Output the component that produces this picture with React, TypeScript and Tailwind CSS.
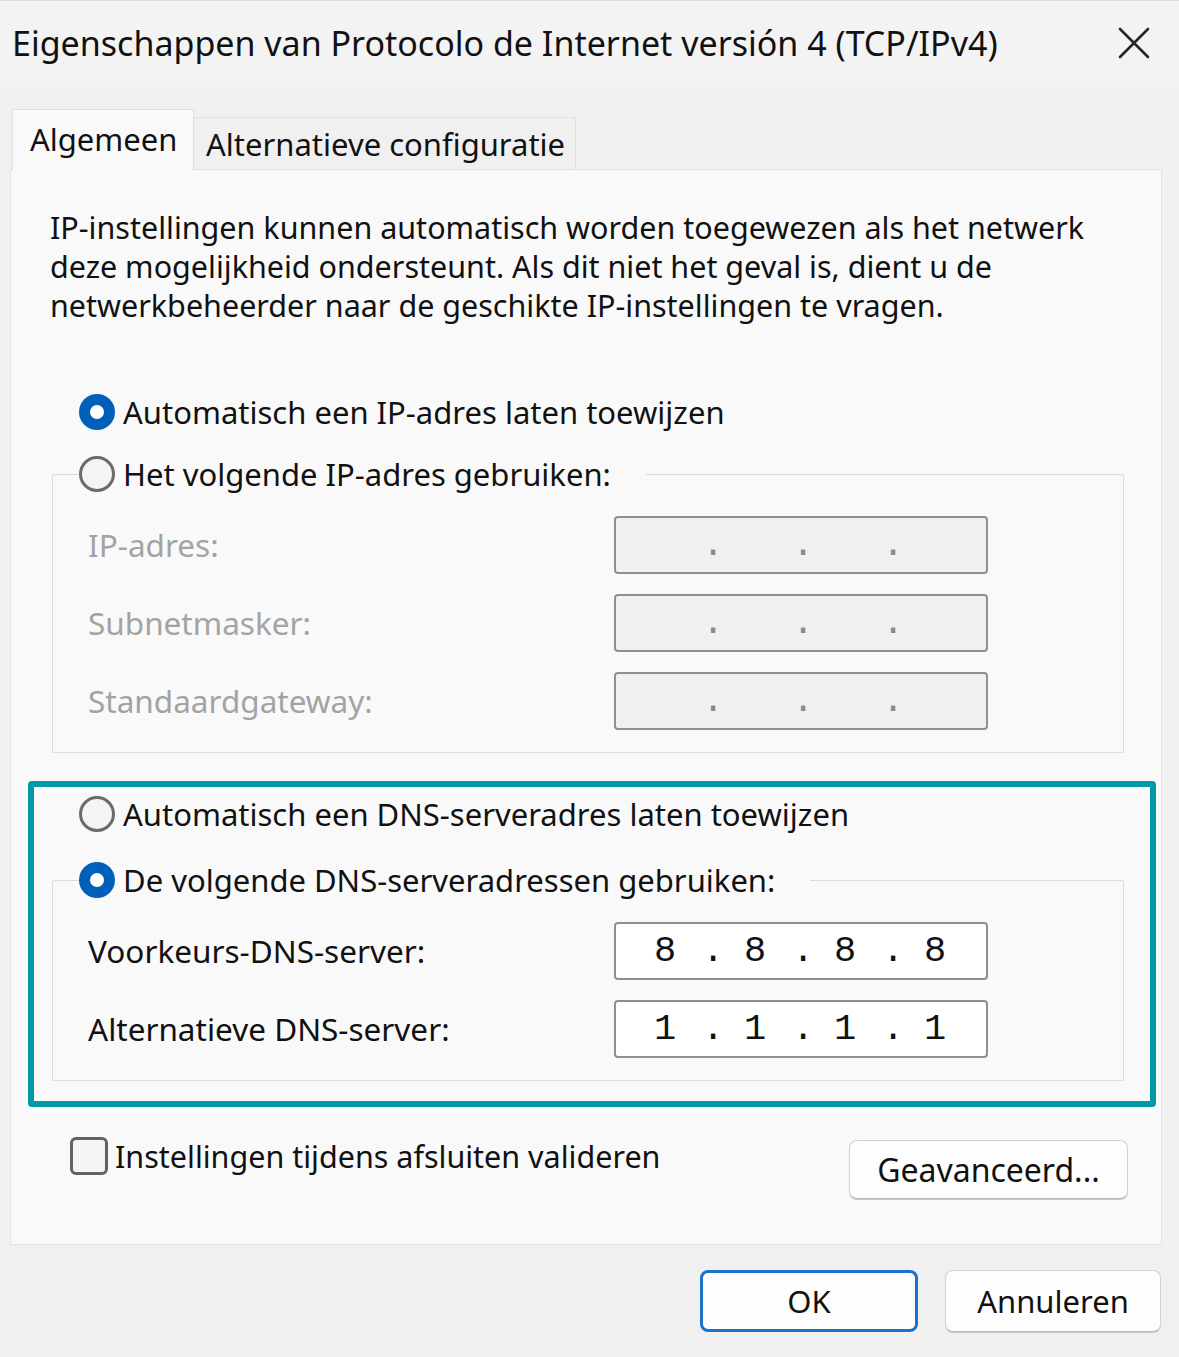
import React from "react";

type RadioProps = { checked?: boolean };

function Radio({ checked }: RadioProps) {
  if (checked) {
    return (
      <span className="flex h-[36px] w-[36px] shrink-0 items-center justify-center rounded-full bg-[#005fb8]">
        <span className="h-[14px] w-[14px] rounded-full bg-white" />
      </span>
    );
  }
  return <span className="h-[36px] w-[36px] shrink-0 rounded-full border-[3px] border-[#6b6b6b] bg-[#f4f4f4]" />;
}

function RadioRow({ checked, label }: { checked?: boolean; label: string }) {
  return (
    <div className="flex h-[40px] items-center gap-[8px]">
      <Radio checked={checked} />
      <span className="whitespace-nowrap">{label}</span>
    </div>
  );
}

function IpField({ label, value, enabled }: { label: string; value?: string[]; enabled?: boolean }) {
  const parts = value ?? ["", "", "", ""];
  return (
    <div className="flex h-[58px] items-center">
      <span className={`w-[526px] whitespace-nowrap text-[31.5px] ${enabled ? "text-[#111]" : "text-[#a3a3a3]"}`}>{label}</span>
      <div
        className={`flex h-[58px] w-[374px] items-center rounded-[4px] border-2 border-[#8f8f8f] pl-[26px] font-['Liberation_Mono',monospace] text-[37px] leading-none ${
          enabled ? "bg-white text-[#111]" : "bg-[#f0f0f0] text-[#8a8a8a]"
        }`}
      >
        {parts.map((p, i) => (
          <React.Fragment key={i}>
            <span className="w-[46px] text-center">{p}</span>
            {i < 3 && <span className="w-[44px] pl-[6px] text-center">.</span>}
          </React.Fragment>
        ))}
      </div>
    </div>
  );
}

function GroupBox({ checked, label, children }: { checked?: boolean; label: string; children: React.ReactNode }) {
  return (
    <fieldset className="w-[1072px] rounded-[2px] border border-[#dcdcdc] pb-[22px] pl-[26px]">
      <legend className="pr-[35px]">
        <RadioRow checked={checked} label={label} />
      </legend>
      <div className="ml-[9px] mt-[22px] flex flex-col gap-[20px]">{children}</div>
    </fieldset>
  );
}

function Button({ children, primary, className }: { children: React.ReactNode; primary?: boolean; className?: string }) {
  return (
    <button
      className={`flex items-center justify-center rounded-[8px] bg-[#fdfdfd] ${
        primary ? "border-[3px] border-[#1a73c8]" : "border border-[#d2d2d2] border-b-[#b8b8b8] shadow-[0_1px_0_#c8c8c8]"
      } ${className ?? ""}`}
    >
      {children}
    </button>
  );
}

export default function App() {
  return (
    <div className="flex h-[1357px] w-[1179px] flex-col overflow-hidden border-t border-[#dadada] bg-[#f0f0f0] font-['Noto_Sans',sans-serif] text-[31px] leading-[40px] text-[#111]">
      {/* title bar */}
      <div className="flex h-[86px] shrink-0 items-center justify-between bg-[#f3f3f3] pb-[2px] pl-[12px] pr-[29px]">
        <span className="whitespace-nowrap text-[34px]">Eigenschappen van Protocolo de Internet versión 4 (TCP/IPv4)</span>
        <svg width="32" height="32" viewBox="0 0 32 32">
          <path d="M2 2 L30 30 M30 2 L2 30" stroke="#262626" strokeWidth="2.6" strokeLinecap="round" />
        </svg>
      </div>

      {/* tabs */}
      <div className="ml-[12px] mt-[22px] flex items-end">
        <div className="relative z-10 -mb-px h-[61px] w-[182px] rounded-t-[3px] border border-b-0 border-[#e0e0e0] bg-[#f9f9f9] pl-[17px] pt-[9px]">
          Algemeen
        </div>
        <div className="h-[52px] w-[382px] border border-b-0 border-l-0 border-[#e0e0e0] bg-[#f0f0f0] pl-[12px] pt-[6px]">
          Alternatieve configuratie
        </div>
      </div>

      {/* panel */}
      <div className="mx-[10px] flex h-[1076px] w-[1152px] flex-col border border-[#e3e3e3] bg-[#f9f9f9]">
        <p className="whitespace-nowrap pl-[39px] pt-[38px] text-[30.5px] leading-[39px]">
          IP-instellingen kunnen automatisch worden toegewezen als het netwerk
          <br />
          deze mogelijkheid ondersteunt. Als dit niet het geval is, dient u de
          <br />
          netwerkbeheerder naar de geschikte IP-instellingen te vragen.
        </p>

        <div className="ml-[68px] mt-[67px]">
          <RadioRow checked label="Automatisch een IP-adres laten toewijzen" />
        </div>

        <div className="ml-[41px] mt-[22px]">
          <GroupBox label="Het volgende IP-adres gebruiken:">
            <IpField label="IP-adres:" />
            <IpField label="Subnetmasker:" />
            <IpField label="Standaardgateway:" />
          </GroupBox>
        </div>

        {/* DNS section */}
        <div className="ml-[17px] mt-[28px] h-[326px] w-[1128px] rounded-[4px] border-[6px] border-[#0099a8] pt-[7px]">
          <div className="ml-[45px]">
            <RadioRow label="Automatisch een DNS-serveradres laten toewijzen" />
          </div>
          <div className="ml-[18px] mt-[26px]">
            <GroupBox checked label="De volgende DNS-serveradressen gebruiken:">
              <IpField enabled label="Voorkeurs-DNS-server:" value={["8", "8", "8", "8"]} />
              <IpField enabled label="Alternatieve DNS-server:" value={["1", "1", "1", "1"]} />
            </GroupBox>
          </div>
        </div>

        <div className="mt-[29px] flex items-start justify-between pl-[59px] pr-[33px]">
          <div className="flex items-center gap-[7px]">
            <span className="h-[38px] w-[38px] rounded-[6px] border-[3px] border-[#626262] bg-[#f4f4f4]" />
            <span className="whitespace-nowrap text-[30.5px]">Instellingen tijdens afsluiten valideren</span>
          </div>
          <Button className="mt-[4px] h-[59px] w-[279px] text-[32px]">Geavanceerd...</Button>
        </div>
      </div>

      {/* dialog buttons */}
      <div className="mt-[25px] flex justify-end gap-[27px] pr-[18px]">
        <Button primary className="h-[62px] w-[218px]">
          OK
        </Button>
        <Button className="h-[62px] w-[216px]">Annuleren</Button>
      </div>
    </div>
  );
}
